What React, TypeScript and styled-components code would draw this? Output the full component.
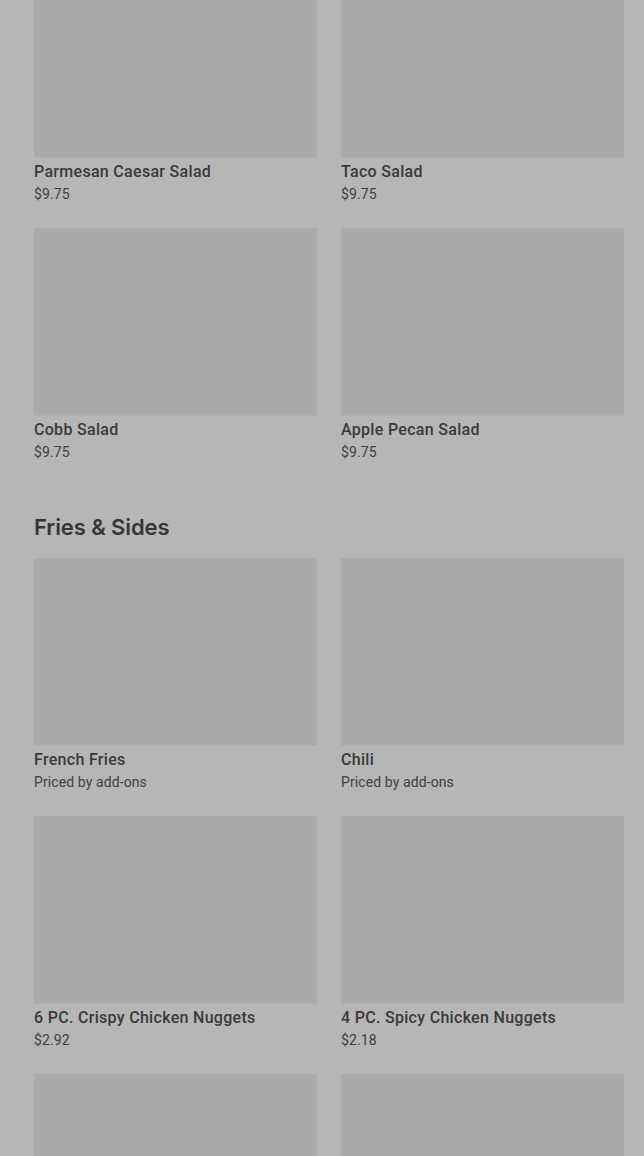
import React from 'react';
import styled, { createGlobalStyle } from 'styled-components';

const GlobalStyle = createGlobalStyle`
  * {
    margin: 0;
    padding: 0;
    box-sizing: border-box;
  }
  body {
    background: #b6b6b6;
    font-family: 'Roboto', 'Liberation Sans', sans-serif;
    overflow: hidden;
  }
`;

const Page = styled.div`
  margin-top: -30px;
  padding: 0 20px 0 34px;
  display: flex;
  flex-direction: column;
  gap: 51px;
`;

const Section = styled.section`
  display: flex;
  flex-direction: column;
`;

const SectionTitle = styled.h2`
  font-family: 'Inter', 'Roboto', sans-serif;
  font-size: 22px;
  font-weight: 600;
  letter-spacing: -0.1px;
  line-height: 28px;
  color: #363636;
  margin-bottom: 17px;
`;

const Grid = styled.div`
  display: grid;
  grid-template-columns: 283px 283px;
  column-gap: 24px;
  row-gap: 24px;
`;

const Card = styled.div`
  display: flex;
  flex-direction: column;
  height: 234px;
`;

const Thumb = styled.div`
  height: 187px;
  background: #aaaaaa;
  box-shadow: 0 1px 0 #b0b0b0;
`;

const Name = styled.div`
  margin-top: 5px;
  font-size: 16px;
  font-weight: 500;
  line-height: 20px;
  letter-spacing: 0.3px;
  color: #3a3a3a;
`;

const Price = styled.div`
  margin-top: 3px;
  font-size: 14px;
  line-height: 18px;
  letter-spacing: 0.1px;
  color: #414141;
`;

type Item = { name?: string; price?: string };

const salads: Item[] = [
  { name: 'Parmesan Caesar Salad', price: '$9.75' },
  { name: 'Taco Salad', price: '$9.75' },
  { name: 'Cobb Salad', price: '$9.75' },
  { name: 'Apple Pecan Salad', price: '$9.75' },
];

// last row is only partly in view, so its captions are left off
const sides: Item[] = [
  { name: 'French Fries', price: 'Priced by add-ons' },
  { name: 'Chili', price: 'Priced by add-ons' },
  { name: '6 PC. Crispy Chicken Nuggets', price: '$2.92' },
  { name: '4 PC. Spicy Chicken Nuggets', price: '$2.18' },
  {},
  {},
];

function MenuGrid({ items }: { items: Item[] }) {
  return (
    <Grid>
      {items.map((item, i) => (
        <Card key={i}>
          <Thumb />
          {item.name && <Name>{item.name}</Name>}
          {item.price && <Price>{item.price}</Price>}
        </Card>
      ))}
    </Grid>
  );
}

export default function App() {
  return (
    <>
      <GlobalStyle />
      <Page>
        <Section>
          <MenuGrid items={salads} />
        </Section>
        <Section>
          <SectionTitle>Fries &amp; Sides</SectionTitle>
          <MenuGrid items={sides} />
        </Section>
      </Page>
    </>
  );
}
